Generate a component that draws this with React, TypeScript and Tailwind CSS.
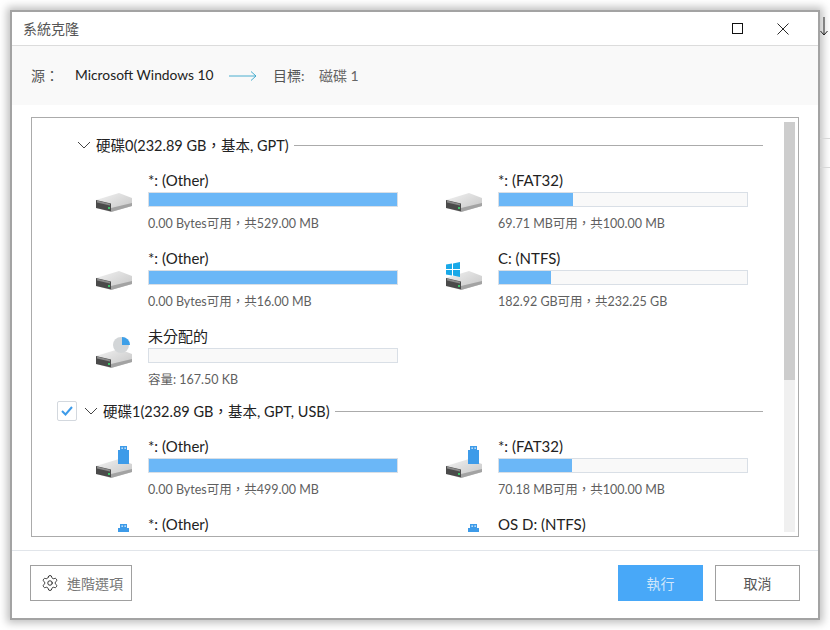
import { Settings } from "lucide-react";

type IconKind = "hdd" | "win" | "pie" | "usb";

interface PartitionProps {
	kind: IconKind;
	name: string;
	used: number;
	info: string;
}

const DriveIcon = ({ kind }: { kind: IconKind }) => (
	<svg width="36" height="44" viewBox="0 0 36 44" className="shrink-0">
		<defs>
			<linearGradient id="hddTop" x1="0" y1="0" x2="1" y2="1">
				<stop offset="0" stopColor="#f2f2f2" />
				<stop offset="1" stopColor="#c4c4c4" />
			</linearGradient>
		</defs>
		<path d="M0 30 L23 23 L36 28 L36 36 L15 42 L0 38 Z" fill="url(#hddTop)" />
		<path d="M15 42 L36 36 L36 33 L15 38 Z" fill="#a3a3a3" />
		<path d="M0 30 L15 33.5 L15 41.5 L0 38 Z" fill="#4a4a4a" />
		<path d="M1 30.5 L14 33.7 L14 35.5 L1 32.5 Z" fill="#8a8a8a" />
		<rect x="12" y="37" width="2" height="2" fill="#3fc46a" />
		{kind === "win" && (
			<g fill="#19a9e8">
				<path d="M0 16.5 L6 15.6 L6 21 L0 21 Z" />
				<path d="M7 15.4 L14 14 L14 21 L7 21 Z" />
				<path d="M0 22 L6 22 L6 27.4 L0 26.5 Z" />
				<path d="M7 22 L14 22 L14 29 L7 27.6 Z" />
			</g>
		)}
		{kind === "pie" && (
			<g>
				<circle cx="25" cy="19" r="8" fill="#d3d6d8" />
				<path d="M26 11 A8 8 0 0 1 34 19 L26 19 Z" fill="#3d9fe8" />
			</g>
		)}
		{kind === "usb" && (
			<g fill="#3d9be9">
				<rect x="24" y="10" width="7" height="5" />
				<rect x="22" y="14" width="11" height="14" />
				<rect x="25.5" y="11.5" width="1.3" height="1.3" fill="#fff" />
				<rect x="28.5" y="11.5" width="1.3" height="1.3" fill="#fff" />
			</g>
		)}
	</svg>
);

const Partition = ({ kind, name, used, info }: PartitionProps) => (
	<div className="flex h-[78px]">
		<DriveIcon kind={kind} />
		<div className="ml-[16px] w-[250px]">
			<div className="h-[20px] leading-[20px] text-[15px] text-[#222]">{name}</div>
			<div className="mt-[2px] h-[15px] border border-[#d9dfe6] bg-[#f9f9f9]">
				<div className="h-full bg-[#6bb7f7]" style={{ width: `${used}%` }} />
			</div>
			<div className="mt-[7px] h-[20px] leading-[20px] text-[12.5px] text-[#5f5f5f]">{info}</div>
		</div>
	</div>
);

const Chevron = () => (
	<svg width="14" height="8" viewBox="0 0 14 8" className="shrink-0">
		<path d="M1 1 L7 7 L13 1" fill="none" stroke="#444" strokeWidth="1" />
	</svg>
);

const disk0: PartitionProps[] = [
	{ kind: "hdd", name: "*: (Other)", used: 100, info: "0.00 Bytes可用，共529.00 MB" },
	{ kind: "hdd", name: "*: (FAT32)", used: 30, info: "69.71 MB可用，共100.00 MB" },
	{ kind: "hdd", name: "*: (Other)", used: 100, info: "0.00 Bytes可用，共16.00 MB" },
	{ kind: "win", name: "C: (NTFS)", used: 21, info: "182.92 GB可用，共232.25 GB" },
	{ kind: "pie", name: "未分配的", used: 0, info: "容量: 167.50 KB" },
];

const disk1: PartitionProps[] = [
	{ kind: "usb", name: "*: (Other)", used: 100, info: "0.00 Bytes可用，共499.00 MB" },
	{ kind: "usb", name: "*: (FAT32)", used: 29.5, info: "70.18 MB可用，共100.00 MB" },
	{ kind: "usb", name: "*: (Other)", used: 100, info: "" },
	{ kind: "usb", name: "OS D: (NTFS)", used: 50, info: "" },
];

const App = () => (
	<div
		className="flex w-[830px] h-[630px] overflow-hidden bg-white pt-[10px] pl-[10px]"
		style={{ fontFamily: 'Lato, "Noto Sans CJK TC", sans-serif' }}
	>
		<div className="flex flex-col shrink-0 w-[810px] h-[610px] bg-white border-2 border-[#a3a3a3] shadow-[0_0_8px_3px_rgba(0,0,0,0.25)]">
			<div className="flex items-center h-[34px] pl-[11px] border-b border-[#dcdcdc]">
				<span className="text-[14px] text-[#555]">系統克隆</span>
				<svg width="11" height="11" viewBox="0 0 11 11" className="ml-auto">
					<rect x="0.5" y="0.5" width="10" height="10" fill="none" stroke="#111" />
				</svg>
				<svg width="12" height="12" viewBox="0 0 12 12" className="ml-[34px] mr-[29px]">
					<path d="M0.5 0.5 L11.5 11.5 M11.5 0.5 L0.5 11.5" stroke="#111" strokeWidth="0.9" />
				</svg>
			</div>

			<div className="flex items-center h-[59px] pl-[19px] bg-[#f9f9f9] text-[14px] text-[#555]">
				<span className="w-[44px]">源：</span>
				<span className="w-[154px] text-[13.8px] text-[#222]">Microsoft Windows 10</span>
				<svg width="28" height="10" viewBox="0 0 28 10">
					<path d="M0 5 L27 5 M22 0.5 L27 5 L22 9.5" fill="none" stroke="#35a5c9" strokeWidth="0.9" />
				</svg>
				<span className="ml-[16px] w-[46px]">目標:</span>
				<span className="text-[#666]">磁碟 1</span>
			</div>

			<div className="flex-1 min-h-0 px-[19px] pt-[12px] pb-[13px]">
				<div className="flex h-full border border-[#ababab] p-[4px] pr-[3px]">
					<div className="flex-1 min-w-0 h-full overflow-hidden">
						<div className="h-[266px] pt-[13px] box-content">
							<div className="flex items-center h-[20px] ml-[41px] mr-[21px] text-[14.5px] text-[#222]">
								<Chevron />
								<span className="ml-[5px] pt-px whitespace-nowrap">硬碟0(232.89 GB，基本, GPT)</span>
								<div className="flex-1 ml-[5px] h-px bg-[#ababab]" />
							</div>
							<div className="grid grid-cols-[350px_350px] mt-[15px] ml-[60px]">
								{disk0.map((p, i) => (
									<Partition key={i} {...p} />
								))}
							</div>
						</div>
						<div className="flex items-center h-[20px] ml-[21px] mr-[21px] text-[14.5px] text-[#222]">
							<div className="flex items-center justify-center shrink-0 w-[20px] h-[20px] border border-[#d3d8de] rounded-[2px] mr-[7px]">
								<svg width="12" height="10" viewBox="0 0 12 10">
									<path d="M1 5 L4.5 8.5 L11 1" fill="none" stroke="#3d9be9" strokeWidth="2" />
								</svg>
							</div>
							<Chevron />
							<span className="ml-[5px] pt-px whitespace-nowrap">硬碟1(232.89 GB，基本, GPT, USB)</span>
							<div className="flex-1 ml-[5px] h-px bg-[#ababab]" />
						</div>
						<div className="grid grid-cols-[350px_350px] mt-[15px] ml-[60px]">
							{disk1.map((p, i) => (
								<Partition key={i} {...p} />
							))}
						</div>
					</div>
					<div className="shrink-0 w-[11px] h-full bg-[#f0f0f0]">
						<div className="h-[258px] bg-[#cdcdcd]" />
					</div>
				</div>
			</div>

			<div className="flex items-start h-[68px] px-[18px] pt-[14px] border-t border-[#e1e5ea]">
				<button className="flex items-center w-[102px] h-[36px] pl-[10px] border border-[#a0a0a0] text-[14px] text-[#777]">
					<Settings size={18} strokeWidth={1.2} color="#222" />
					<span className="ml-[8px]">進階選項</span>
				</button>
				<button className="ml-auto w-[85px] h-[36px] bg-[#48a8f8] text-[14px] text-[#cfe6fb]">執行</button>
				<button className="ml-[12px] w-[85px] h-[36px] border border-[#a0a0a0] text-[14px] text-[#555]">取消</button>
			</div>
		</div>
		<div className="flex flex-col w-[10px] shrink-0">
			<svg width="8" height="19" viewBox="0 0 8 19" className="mt-[7px] shrink-0">
				<path d="M4 0 L4 18 M0.5 14 L4 18 L7.5 14" fill="none" stroke="#222" strokeWidth="1" />
			</svg>
			<div className="mt-[102px] h-px bg-[#d8d8d8]" />
			<div className="mt-[28px] h-px bg-[#d8d8d8]" />
		</div>
	</div>
);

export default App;
